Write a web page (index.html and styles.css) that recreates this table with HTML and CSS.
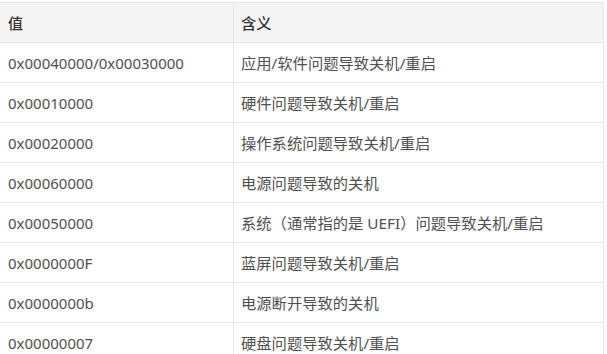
FILE: index.html
```html
<!DOCTYPE html>
<html lang="zh-CN">
<head>
<meta charset="utf-8">
<link rel="stylesheet" href="styles.css">
</head>
<body>
<div class="wrap">
<table class="codes">
<thead>
<tr><th class="c-val">值</th><th class="c-mean">含义</th></tr>
</thead>
<tbody>
<tr><td>0x00040000/0x00030000</td><td>应用/软件问题导致关机/重启</td></tr>
<tr><td>0x00010000</td><td>硬件问题导致关机/重启</td></tr>
<tr><td>0x00020000</td><td>操作系统问题导致关机/重启</td></tr>
<tr><td>0x00060000</td><td>电源问题导致的关机</td></tr>
<tr><td>0x00050000</td><td>系统（通常指的是 UEFI）问题导致关机/重启</td></tr>
<tr><td>0x0000000F</td><td>蓝屏问题导致关机/重启</td></tr>
<tr><td>0x0000000b</td><td>电源断开导致的关机</td></tr>
<tr><td>0x00000007</td><td>硬盘问题导致关机/重启</td></tr>
</tbody>
</table>
</div>
</body>
</html>
```
FILE: styles.css
```css
html, body {
  margin: 0;
  padding: 0;
  background: #ffffff;
}
.wrap {
  padding-top: 2px;
  margin-left: -1px;
}
.codes {
  border-collapse: collapse;
  width: 605px;
  table-layout: fixed;
  font-family: "Noto Sans", "Noto Sans CJK SC", sans-serif;
  font-size: 15px;
  color: #505050;
}
.codes th, .codes td {
  border: 1px solid #e6e6e6;
  height: 39px;
  padding: 0 0 0 8px;
  text-align: left;
  vertical-align: middle;
  line-height: 20px;
}
.codes td + td, .codes th + th {
  padding-left: 7px;
  font-size: 15.3px;
}
.codes th {
  background: #f4f4f4;
  font-weight: 500;
  color: #333333;
}
.c-val {
  width: 225px;
}
```
